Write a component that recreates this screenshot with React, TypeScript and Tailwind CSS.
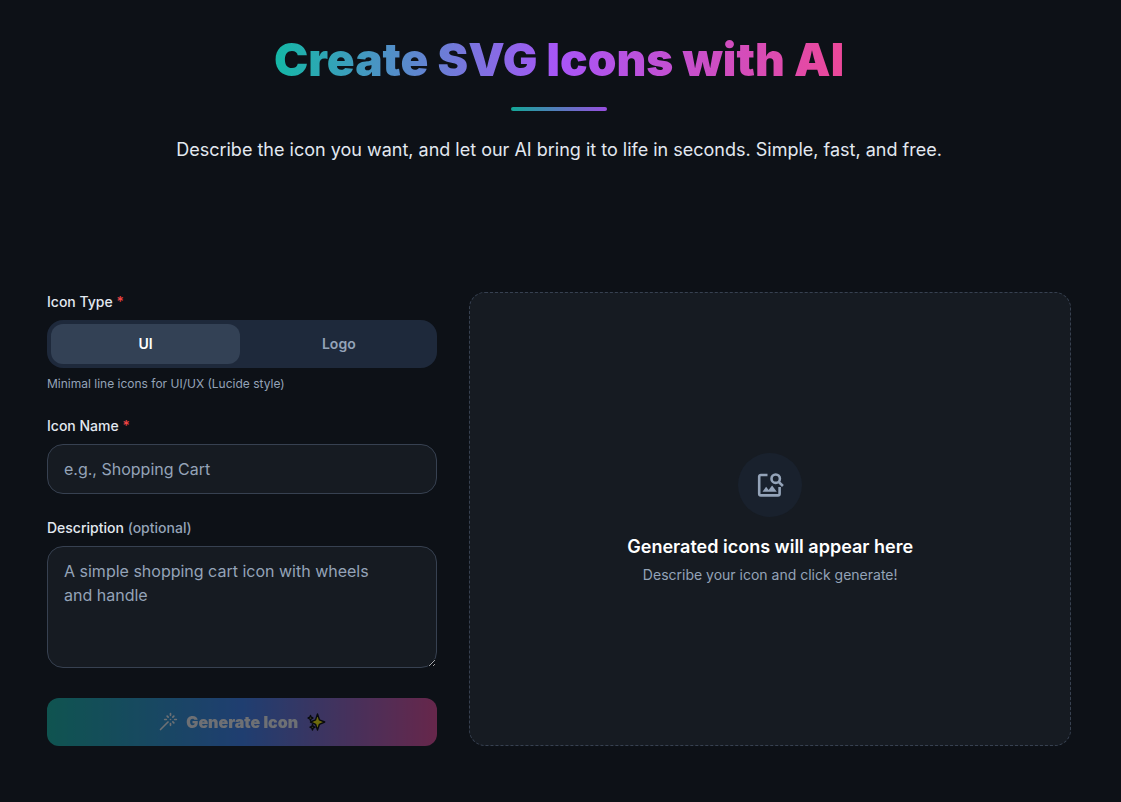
import React, { useState } from 'react'
import { Wand } from 'lucide-react'

type IconType = 'ui' | 'logo'

const ICON_TYPES: { id: IconType; label: string; hint: string }[] = [
  { id: 'ui', label: 'UI', hint: 'Minimal line icons for UI/UX (Lucide style)' },
  { id: 'logo', label: 'Logo', hint: 'Bold filled marks for brands and apps' },
]

function Sparkles() {
  return (
    <svg className="h-5 w-5" viewBox="0 0 20 20" aria-hidden="true">
      <g stroke="#000" strokeWidth="1.4" strokeLinejoin="round">
        <path fill="#fff200" d="M11.500 2l1.900 5.800 5.300 2.200-5.300 2.300-1.900 5.700-1.900-5.700L4.500 10l5.100-2.200z" />
        <path fill="#fde68a" d="M4.500 3.500l.7 1.700 1.700.8-1.700.8-.7 1.700-.7-1.700L2.100 6l1.700-.8z" />
        <path fill="#fde68a" d="M6.500 12.500l.7 1.900 1.800.8-1.800.8-.7 2-.7-2-1.800-.8 1.800-.8z" />
      </g>
    </svg>
  )
}

function ImageSearchIcon() {
  return (
    <svg className="h-8 w-8 text-[#94a3b8]" viewBox="0 0 32 32" fill="none" stroke="currentColor" aria-hidden="true">
      <path strokeWidth="2.600" d="M13.500 6H6.800a1.600 1.600 0 0 0-1.600 1.600v17.200a1.600 1.600 0 0 0 1.600 1.600h17.200a1.600 1.600 0 0 0 1.600-1.600V18" />
      <circle cx="21.700" cy="9.700" r="4.200" strokeWidth="2.600" />
      <path strokeWidth="2.600" d="M24.700 12.800l4.200 4.200" />
      <path fill="currentColor" stroke="none" d="M8.500 22.800l3.600-5 2.500 3.200 3.500-4.500 4.700 6.300z" />
    </svg>
  )
}

function Hero() {
  return (
    <header className="flex flex-col items-center px-4 pt-8 text-center">
      <h1 className="bg-linear-to-r/srgb from-[#14b8a6] via-[#a855f7] to-[#ec4899] bg-clip-text text-[46px] leading-[55px] font-black text-transparent">
        Create SVG Icons with AI
      </h1>
      <div className="mt-5 h-1 w-24 rounded-full bg-linear-to-r/srgb from-[#14b8a6] to-[#a855f7] opacity-90" />
      <p className="mt-[25px] text-lg leading-7 text-slate-200">
        Describe the icon you want, and let our AI bring it to life in seconds. Simple, fast, and free.
      </p>
    </header>
  )
}

function IconForm() {
  const [iconType, setIconType] = useState<IconType>('ui')
  const [name, setName] = useState('')
  const [description, setDescription] = useState('')
  const active = ICON_TYPES.find((t) => t.id === iconType)!

  return (
    <form className="flex flex-col lg:col-span-2" onSubmit={(e) => e.preventDefault()}>
      <div role="group" aria-labelledby="icon-type-label">
        <span id="icon-type-label" className="block text-sm font-medium text-slate-200">
          Icon Type <span className="text-[#ef4444]">*</span>
        </span>
        <div className="mt-2 flex gap-1 rounded-2xl bg-[#1e293b] p-1">
          {ICON_TYPES.map((type) => (
            <button
              key={type.id}
              type="button"
              aria-pressed={iconType === type.id}
              onClick={() => setIconType(type.id)}
              className={`h-10 flex-1 rounded-xl text-sm font-semibold ${
                iconType === type.id ? 'bg-[#334155] text-white' : 'text-[#94a3b8]'
              }`}
            >
              {type.label}
            </button>
          ))}
        </div>
        <p className="mt-2 text-xs text-[#94a3b8]">{active.hint}</p>
      </div>

      <div className="mt-6">
        <label htmlFor="icon-name" className="block text-sm font-medium text-slate-200">
          Icon Name <span className="text-[#ef4444]">*</span>
        </label>
        <input
          id="icon-name"
          type="text"
          value={name}
          onChange={(e) => setName(e.target.value)}
          placeholder="e.g., Shopping Cart"
          className="mt-2 block h-[50px] w-full rounded-2xl border border-[#374151] bg-[#161b22] px-4 text-base text-white placeholder:text-[#94a3b8]"
        />
      </div>

      <div className="mt-6">
        <label htmlFor="icon-description" className="block text-sm font-medium text-slate-200">
          Description <span className="text-[#94a3b8]">(optional)</span>
        </label>
        <textarea
          id="icon-description"
          rows={4}
          value={description}
          onChange={(e) => setDescription(e.target.value)}
          placeholder={'A simple shopping cart icon with wheels\nand handle'}
          className="mt-2 block w-full rounded-2xl border border-[#374151] bg-[#161b22] px-4 py-3 text-base text-white placeholder:text-[#94a3b8]"
        />
      </div>

      <button
        type="submit"
        disabled={!name.trim()}
        className="mt-[30px] flex h-12 w-full items-center justify-center gap-2 rounded-xl bg-linear-to-r/srgb from-[#14b8a6] via-[#3b82f6] to-[#ec4899] font-black text-white disabled:opacity-40"
      >
        <Wand className="h-5 w-5" strokeWidth={2} />
        Generate Icon
        <Sparkles />
      </button>
    </form>
  )
}

function PreviewPanel() {
  return (
    <section className="flex flex-col items-center justify-center rounded-2xl border border-dashed border-[#374151] bg-[#161b22] p-8 text-center lg:col-span-3">
      <div className="flex h-16 w-16 items-center justify-center rounded-full bg-[#19212d]">
        <ImageSearchIcon />
      </div>
      <h2 className="mt-4 text-lg font-semibold text-white">Generated icons will appear here</h2>
      <p className="mt-1 text-sm text-[#94a3b8]">Describe your icon and click generate!</p>
    </section>
  )
}

export default function App() {
  return (
    <div className="min-h-screen bg-[#0d1117] pr-[3px] font-['Inter',sans-serif]">
      <Hero />
      <main className="mx-auto mt-32 grid max-w-5xl gap-8 lg:grid-cols-5">
        <IconForm />
        <PreviewPanel />
      </main>
    </div>
  )
}
